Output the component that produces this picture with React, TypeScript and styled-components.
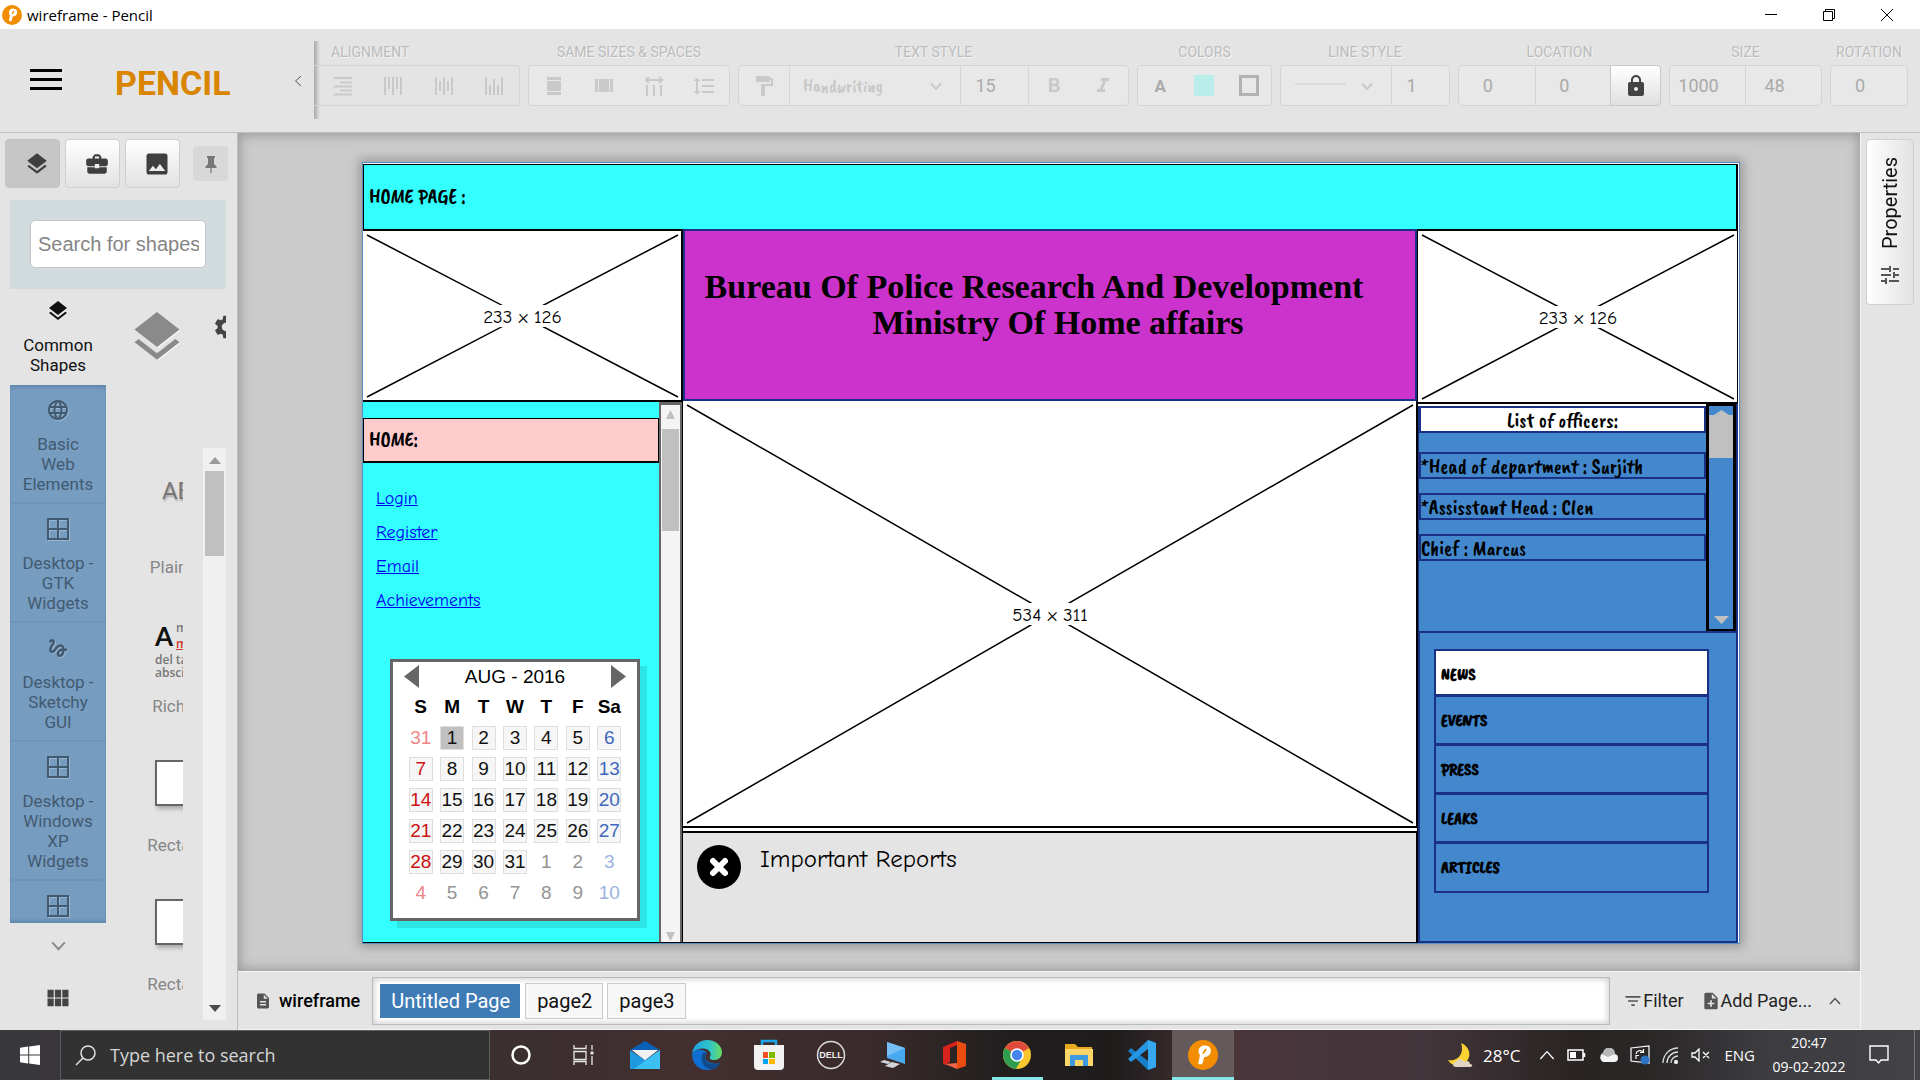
import React from "react";
import styled, { createGlobalStyle, css } from "styled-components";
import {
  MdLayers, MdBusinessCenter, MdImage, MdLanguage, MdGesture, MdSettings, MdViewModule,
  MdFormatPaint, MdLock, MdFilterList, MdNoteAdd, MdDescription, MdTune,
  MdFormatBold, MdFormatItalic, MdFormatLineSpacing,
} from "react-icons/md";

const ui = `Roboto, "Liberation Sans", sans-serif`;
const system = `"Segoe UI", "Open Sans", "Noto Sans", sans-serif`;
const comic = `"Comic Sans MS", "Comic Neue", "Noto Sans", sans-serif`;
const brush = `"Caveat Brush", "Roboto Condensed", "Liberation Sans Narrow", Roboto, sans-serif`;
const arial = `Arial, "Liberation Sans", sans-serif`;
const navy = "#1b3185";
const sky = "#4388cd";
const cyan = "#33ffff";

const Global = createGlobalStyle`
  * { box-sizing: border-box; }
  body { margin: 0; font-family: ${ui}; background: #e4e4e4; }
  button, input, select { font: inherit; color: inherit; margin: 0; padding: 0; border: 0; background: none; border-radius: 0; }
  svg { display: block; flex: none; }
`;

const Shell = styled.div`
  display: flex;
  flex-direction: column;
  height: 100vh;
  min-height: 720px;
  overflow: hidden;
`;

/* ---------- title bar ---------- */
const TitleBar = styled.header`
  display: flex;
  align-items: center;
  height: 29px;
  flex: none;
  padding: 0 4px 0 2px;
  background: #fff;
  font: 15px/20px ${system};
  color: #000;
`;
const WindowTitle = styled.span`
  flex: 1;
  padding-left: 5px;
`;
const WindowButton = styled.button`
  display: grid;
  place-items: center;
  width: 58px;
  height: 29px;
`;

const PencilLogo = ({ size }: { size: number }) => (
  <svg width={size} height={size} viewBox="0 0 20 20">
    <circle cx="10" cy="10" r="10" fill="#f28c00" />
    <path d="M7.5 15.5 8.6 10C7.7 9 7.3 8 7.6 6.800 8.200 4.800 10 4 12 4.300c2 .3 3 1.800 2.600 3.700-.4 1.900-2.200 3-4.200 2.700L9 15.600z" fill="#fff" stroke="#fff" strokeWidth="1.200" strokeLinejoin="round" />
    <path d="m10.300 8.600 1.500-2.200" stroke="#f28c00" strokeWidth="1.200" strokeLinecap="round" />
  </svg>
);

/* ---------- tool bar ---------- */
const ToolBar = styled.div`
  display: flex;
  height: 104px;
  flex: none;
  background: #e4e4e4;
  border-bottom: 1px solid #bebebe;
`;
const Brand = styled.div`
  display: flex;
  align-items: center;
  width: 314px;
  height: 104px;
  flex: none;
  padding: 0 10px 0 30px;
`;
const MenuButton = styled.button`
  display: flex;
  flex-direction: column;
  gap: 6px;
  width: 32px;
  margin-bottom: 4px;
`;
const MenuBar = styled.span`
  height: 3px;
  background: #000;
`;
const BrandName = styled.strong`
  flex: 1;
  padding: 3px 0 0 53px;
  font-size: 34px;
  line-height: 40px;
  font-weight: 700;
  color: #d98500;
`;
const PlainButton = styled.button<{ $tone?: string }>`
  display: grid;
  place-items: center;
  color: ${(p) => p.$tone ?? "#555"};
`;
const Tools = styled.div`
  display: flex;
  gap: 8px;
  flex: 1;
  height: 78px;
  margin-top: 12px;
  overflow: hidden;
  background: linear-gradient(90deg, #a8a8a8, #e4e4e4) left top / 6px 100% no-repeat;
`;
const GroupLabel = styled.span`
  padding-top: 1px;
  height: 24px;
  line-height: 20px;
  font-size: 14px;
  text-align: center;
  white-space: nowrap;
  color: #bcbcbc;
  text-shadow: 1px 1px 0 #f4f4f4;
`;
const GroupBox = styled.div`
  display: flex;
  height: 41px;
  border: 1px solid #d4d4d4;
  border-radius: 4px;
  background: #e8e8e8;
  color: #c9c9c9;
`;
const Group = styled.fieldset<{ $w: number; $clip?: boolean }>`
  display: flex;
  flex-direction: column;
  width: ${(p) => p.$w}px;
  flex: none;
  margin: 0;
  padding: 0;
  border: 0;
  ${(p) => p.$clip && css`
    ${GroupLabel} { text-align: left; padding-left: 17px; }
    ${GroupBox} { border-left: 0; border-radius: 0 4px 4px 0; padding-left: 4px; background: none; }
  `}
`;
const Cell = styled.div<{ $w?: number; $line?: boolean }>`
  display: grid;
  grid-template-columns: 1fr auto;
  align-items: center;
  ${(p) => (p.$w ? `width: ${p.$w}px;` : "flex: 1;")}
  ${(p) => p.$line && "border-right: 1px solid #d6d6d6;"}
`;
const ToolButton = styled.button`
  display: grid;
  place-items: center;
  flex: 1;
  height: 39px;
`;
const Value = styled.input<{ $line?: boolean }>`
  flex: 1;
  width: 100%;
  min-width: 0;
  padding-right: 18px;
  font-size: 18px;
  text-align: center;
  color: #aaa;
  ${(p) => p.$line && "border-right: 1px solid #d6d6d6;"}
`;
const Pick = styled.select`
  grid-area: 1 / 1 / 2 / 3;
  height: 39px;
  width: 100%;
  padding-left: 13px;
  appearance: none;
  font-family: ${brush};
  font-size: 18px;
  color: #c8c8c8;
`;
const PickMark = styled.span`
  grid-area: 1 / 2;
  padding-right: 18px;
  pointer-events: none;
`;
const PickLine = styled.span`
  grid-area: 1 / 1;
  width: 51px;
  height: 2px;
  margin: 0 0 4px 14px;
  background: #dcdcdc;
`;
const FontLetter = styled.span`
  font-size: 17px;
  font-weight: 700;
  color: #aaa;
`;
const Swatch = styled.span<{ $ring?: boolean }>`
  width: 20px;
  height: 21px;
  ${(p) => (p.$ring ? "border: 3px solid #b2b2b2;" : "background: #b9edea;")}
`;
const LockButton = styled.button`
  display: grid;
  place-items: center;
  width: 51px;
  border: 1px solid #c8c8c8;
  border-radius: 0 4px 4px 0;
  margin: -1px;
  background: linear-gradient(#fff, #e0e0e0);
  color: #444;
`;

const Chevron = ({ dir, size = 12, w = 2 }: { dir: "up" | "down" | "left"; size?: number; w?: number }) => {
  const d = { up: "M1 9 6 3.500 11 9", down: "M1 3.500 6 9 11 3.500", left: "M9 1 3.500 6 9 11" }[dir];
  return (
    <svg width={size} height={size} viewBox="0 0 12 12" fill="none" stroke="currentColor" strokeWidth={w}>
      <path d={d} />
    </svg>
  );
};
const Bars = ({ d, w = 2 }: { d: string; w?: number }) => (
  <svg width="20" height="20" viewBox="0 0 20 20" fill="none" stroke="currentColor" strokeWidth={w}>
    <path d={d} />
  </svg>
);

/* ---------- body ---------- */
const Body = styled.div`
  display: flex;
  flex: 1;
  min-height: 0;
`;
const SidePanel = styled.aside`
  display: flex;
  flex-direction: column;
  width: 238px;
  flex: none;
  padding: 6px 11px 0 10px;
  border-right: 1px solid #bdbdbd;
  background: #e4e4e4;
`;
const PanelTabs = styled.div`
  display: flex;
  align-items: center;
  gap: 5px;
  margin-left: -5px;
  margin-right: -2px;
`;
const PanelTab = styled.button<{ $on?: boolean }>`
  display: grid;
  place-items: center;
  width: 55px;
  height: 49px;
  padding-left: 8px;
  border: 1px solid ${(p) => (p.$on ? "#c2c2c2" : "#cfcfcf")};
  border-radius: 4px;
  background: ${(p) => (p.$on ? "#c6c6c6" : "linear-gradient(#fff, #e2e2e2)")};
  color: #3f3f3f;
`;
const PinButton = styled.button`
  display: grid;
  place-items: center;
  width: 35px;
  height: 35px;
  margin-left: auto;
  border-radius: 4px;
  background: #d8d8d8;
  color: #777;
`;
const SearchBand = styled.div`
  margin-top: 12px;
  padding: 20px 20px 21px;
  background: #d1dadd;
`;
const SearchInput = styled.input`
  display: block;
  width: 100%;
  height: 48px;
  padding: 0 6px 0 7px;
  border: 1px solid #c4c8ca;
  border-radius: 5px;
  background: #fff;
  font: 20px ${arial};
  &::placeholder { color: #858585; }
`;
const Library = styled.div`
  display: flex;
  flex: 1;
  min-height: 0;
`;
const Categories = styled.nav`
  display: flex;
  flex-direction: column;
  width: 96px;
  flex: none;
`;
const CategoryList = styled.div`
  flex: 1;
  min-height: 0;
  overflow: hidden;
  background: #769cc0;
  box-shadow: inset 0 4px 4px -2px #5d83a8, inset 0 -4px 4px -2px #5d83a8;
`;
const Category = styled.button<{ $on?: boolean }>`
  display: flex;
  flex-direction: column;
  align-items: center;
  gap: 12px;
  width: 96px;
  flex: none;
  padding: ${(p) => (p.$on ? 10 : 13)}px 10px 8px;
  border-bottom: 2px solid ${(p) => (p.$on ? "#e4e4e4" : "#6e94b9")};
  font-size: 17px;
  line-height: 20px;
  color: ${(p) => (p.$on ? "#111" : "#425a70")};
  svg { width: 24px; height: 24px; filter: drop-shadow(1px 1px 0 rgba(255, 255, 255, 0.25)); }
`;
const CategoryFoot = styled.div`
  display: flex;
  flex-direction: column;
  align-items: center;
  gap: 31px;
  height: 107px;
  padding-top: 15px;
`;
const Shapes = styled.section`
  display: flex;
  flex-direction: column;
  flex: 1;
  min-width: 0;
`;
const ShapesHead = styled.div`
  display: flex;
  align-items: flex-start;
  justify-content: space-between;
  height: 159px;
  flex: none;
  padding: 18px 0 0 21px;
  overflow: hidden;
`;
const HeadIcon = styled.span`
  color: #8a8a8a;
  filter: drop-shadow(1px 1px 0 #f6f6f6);
`;
const GearButton = styled.button`
  display: flex;
  justify-content: flex-start;
  width: 14px;
  padding-top: 6px;
  overflow: hidden;
  color: #444;
`;
const ShapesBody = styled.div`
  display: flex;
  justify-content: space-between;
  flex: 1;
  min-height: 0;
  padding-bottom: 10px;
`;
const ShapeList = styled.div`
  width: 77px;
  overflow: hidden;
`;
const Shape = styled.figure`
  display: flex;
  flex-direction: column;
  align-items: center;
  gap: 12px;
  width: 158px;
  height: 139px;
  margin: 0;
  padding-top: 17px;
`;
const ShapeThumb = styled.div`
  display: flex;
  align-items: center;
  justify-content: center;
  width: 60px;
  height: 80px;
`;
const ShapeName = styled.figcaption`
  font-size: 17px;
  line-height: 20px;
  white-space: nowrap;
  color: #868686;
`;
const PlainSample = styled.span`
  padding-bottom: 28px;
  font: 24px/28px ${ui};
  color: #777;
  text-shadow: 1px 2px 2px #aaa;
`;
const RichSample = styled.div`
  display: grid;
  grid-template: 16px 16px 13px 13px / 20px 1fr;
  column-gap: 1px;
  width: 60px;
  margin-top: 12px;
  font: 600 12px/14px "Open Sans", sans-serif;
  color: #777;
`;
const BigA = styled.span`
  grid-row: 1 / 3;
  font: 700 26px/30px Lato, sans-serif;
  color: #111;
`;
const Misspelt = styled.span`
  color: #c33;
  text-decoration: underline;
`;
const Wide = styled.span`
  grid-column: 1 / 3;
`;
const RectSample = styled.span`
  width: 60px;
  height: 46px;
  border: 2px solid #666;
  background: #fff;
  box-shadow: 2px 3px 4px #aaa;
`;
const ScrollTrack = styled.div`
  display: flex;
  flex-direction: column;
  align-items: center;
  width: 23px;
  height: 100%;
  padding: 9px 0 8px;
  background: #f0f0f0;
`;
const ScrollThumb = styled.div`
  width: 19px;
  height: 85px;
  margin: 7px 0 auto;
  background: #c0c0c0;
`;
const Triangle = ({ dir, color, w = 12, h = 7 }: { dir: "up" | "down" | "left" | "right"; color: string; w?: number; h?: number }) => (
  <svg width={w} height={h} viewBox="0 0 10 10" preserveAspectRatio="none" fill={color}>
    <path d={{ up: "M0 10 5 0l5 10z", down: "M0 0h10L5 10z", left: "M10 0v10L0 5z", right: "M0 0v10l10-5z" }[dir]} />
  </svg>
);
const Pane = () => (
  <svg viewBox="0 0 24 24" fill="none" stroke="currentColor" strokeWidth="2">
    <path d="M2 2h20v20H2zM12 2v20M2 12h20" />
  </svg>
);

/* ---------- workspace ---------- */
const Main = styled.main`
  display: flex;
  flex-direction: column;
  flex: 1;
  min-width: 0;
`;
const Workspace = styled.div`
  display: flex;
  flex: 1;
  min-height: 0;
  padding: 29px 120px 27px 124px;
  background: #cbcbcb;
  box-shadow: inset 0 0 12px 2px #999;
`;
const Sheet = styled.article`
  display: flex;
  flex-direction: column;
  flex: 1;
  min-width: 0;
  padding: 1px 1px 0 0;
  border: 1px solid #5a8fc2;
  background: #fff;
  box-shadow: 0 0 10px 3px #999;
  color: #000;
`;
const PageHead = styled.h1`
  display: flex;
  align-items: center;
  height: 67px;
  margin: 0;
  padding: 0 0 2px 5px;
  border: solid #000;
  border-width: 1px 2px 2px 1px;
  background: ${cyan};
  font: 400 21px/24px ${brush};
`;
const Columns = styled.div`
  display: flex;
  flex: 1;
  min-height: 0;
`;
const SideColumn = styled.section`
  display: flex;
  flex-direction: column;
  width: 319px;
  flex: none;
`;
const MidColumn = styled.section`
  display: flex;
  flex-direction: column;
  flex: 1;
  min-width: 0;
  margin-top: -2px;
  border-left: 1px solid #000;
`;
const PictureBox = styled.div<{ $h?: number }>`
  display: grid;
  place-items: center;
  ${(p) => (p.$h ? `height: ${p.$h}px; flex: none;` : "flex: 1; min-height: 0;")}
  border: solid #000;
  border-width: 0 1px 2px 0;
  background: #fff;
  padding: 4px 3px 3px 4px;
  > * { grid-area: 1 / 1; }
  > svg { width: 100%; height: 100%; min-height: 0; overflow: visible; }
`;
const PictureLabel = styled.span`
  padding: 2px 2px 0;
  background: #fff;
  font: 19px/20px ${comic};
`;
const Picture = ({ h, label }: { h?: number; label: string }) => (
  <PictureBox $h={h}>
    <svg viewBox="0 0 100 100" preserveAspectRatio="none" stroke="#000" strokeWidth="1.500">
      <path d="M0 0 100 100M100 0 0 100" vectorEffect="non-scaling-stroke" />
    </svg>
    <PictureLabel>{label}</PictureLabel>
  </PictureBox>
);

const LeftPanel = styled.div`
  display: flex;
  flex: 1;
  min-height: 0;
  border-bottom: 1px solid #000;
`;
const LeftBody = styled.div`
  flex: 1;
  padding-top: 16px;
  background: ${cyan};
`;
const HomeTitle = styled.h2`
  height: 45px;
  margin: 0;
  padding: 8px 5px;
  border: solid #000;
  border-width: 1px 1px 2px;
  background: #ffcccc;
  font: 400 21px/24px ${brush};
`;
const Links = styled.ul`
  display: flex;
  flex-direction: column;
  gap: 10px;
  margin: 24px 0 0 13px;
  padding: 0;
  list-style: none;
  font: 18px/24px ${comic};
`;
const PageLink = styled.a`
  color: #0000f5;
  text-decoration: underline;
`;
const SketchScroll = styled.div`
  display: flex;
  flex-direction: column;
  align-items: center;
  justify-content: space-between;
  width: 23px;
  padding: 5px 0 1px;
  border: solid #666;
  border-width: 3px 2px 0;
  background: #f4f4f4;
`;
const SketchThumb = styled.div`
  width: 17px;
  height: 102px;
  margin: 10px 0 auto;
  background: #c0c0c0;
`;
const CalendarBox = styled.div`
  width: 250px;
  height: 262px;
  margin: 46px 0 0 27px;
  border: 3px solid #666;
  background: #fff;
  box-shadow: 7px 7px 0 #2ee5e5;
  font: 19px/21px ${arial};
`;
const CalendarHead = styled.div`
  display: flex;
  align-items: center;
  justify-content: space-between;
  height: 28px;
  padding: 0 11px;
`;
const CalendarTable = styled.table`
  width: 220px;
  margin: 0 12px;
  border-collapse: collapse;
  table-layout: fixed;
  text-align: center;
  th { height: 32px; padding: 0; }
  td { height: 31px; padding: 0; }
`;
const Day = styled.span<{ $col: number; $out?: boolean; $on?: boolean }>`
  display: block;
  width: 24px;
  height: 24px;
  margin: 0 auto;
  border: 1px solid ${(p) => (p.$out ? "transparent" : "#dedede")};
  background: ${(p) => (p.$out ? "#fff" : p.$on ? "#c0c0c0" : "#f6f6f6")};
  color: ${(p) =>
    p.$col === 0 ? (p.$out ? "#ee8484" : "#cc1111") : p.$col === 6 ? (p.$out ? "#9db2e0" : "#4068bd") : p.$out ? "#949494" : "#111"};
`;

const Banner = styled.div`
  height: 172px;
  flex: none;
  padding: 38px 32px 0 0;
  border: 2px solid ${navy};
  background: #cc33cc;
  text-align: center;
  font: 700 34px/36px "Times New Roman", "Liberation Serif", serif;
`;
const BannerLine = styled.div<{ $shift?: boolean }>`
  padding-left: ${(p) => (p.$shift ? 48 : 0)}px;
  white-space: nowrap;
`;
const Reports = styled.div`
  display: flex;
  gap: 19px;
  height: 112px;
  flex: none;
  margin-top: 3px;
  padding: 12px 14px;
  border: solid #000;
  border-width: 2px 1px 1px 0;
  background: #e4e4e4;
  font: 25px/28px ${comic};
`;

const RightColumn = styled(SideColumn)`
  width: 321px;
  border-left: 1px solid #000;
`;
const Officers = styled.div`
  display: flex;
  height: 227px;
  flex: none;
  border-right: 2px solid ${navy};
`;
const OfficerList = styled.ul`
  flex: 1;
  margin: 2px 0 0;
  padding: 0;
  list-style: none;
  background: ${sky};
  border-left: 1px solid ${navy};
`;
const Officer = styled.li<{ $title?: boolean }>`
  height: 27px;
  margin-bottom: ${(p) => (p.$title ? 19 : 14)}px;
  border: 2px solid ${navy};
  ${(p) => p.$title && "background: #fff; text-align: center;"}
  font: 21px/24px ${brush};
  white-space: nowrap;
`;
const OfficerScroll = styled.div`
  display: flex;
  flex-direction: column;
  align-items: center;
  width: 30px;
  padding: 4px 0 5px;
  border: solid #000;
  border-width: 2px 3px;
  background: ${sky};
`;
const OfficerThumb = styled.div`
  width: 24px;
  height: 43px;
  margin-bottom: auto;
  background: #c0c0c0;
`;
const NewsPanel = styled.div`
  flex: 1;
  padding: 16px 27px 0 14px;
  border: 2px solid ${navy};
  background: ${sky};
`;
const NewsList = styled.ul`
  margin: 0;
  padding: 0;
  border: 2px solid ${navy};
  list-style: none;
`;
const NewsItem = styled.li<{ $on?: boolean }>`
  height: ${(p) => (p.$on ? 46 : 49)}px;
  padding-left: 5px;
  border-bottom: 3px solid ${navy};
  ${(p) => p.$on && "background: #fff;"}
  font: 700 17px/48px ${brush};
  &:last-child { border-bottom: 0; height: 47px; }
`;

/* ---------- page tabs ---------- */
const PageBar = styled.footer`
  display: flex;
  align-items: center;
  height: 59px;
  flex: none;
  padding: 0 19px 0 16px;
  border: 1px solid #f6f6f6;
  border-width: 1px 0;
  background: #e4e4e4;
  color: #555;
`;
const DocName = styled.strong`
  padding: 0 12px 0 7px;
  font-size: 18px;
  font-weight: 500;
  color: #000;
`;
const PageTabs = styled.div`
  display: flex;
  align-items: center;
  gap: 4px;
  flex: 1;
  height: 48px;
  margin-right: 13px;
  padding: 0 6px;
  border: 1px solid #bbb;
  background: #fff;
  box-shadow: inset 0 0 6px 1px #ccc;
`;
const PageTab = styled.button<{ $on?: boolean }>`
  height: 36px;
  padding: 0 10px 0 11px;
  font-size: 20px;
  border: 1px solid ${(p) => (p.$on ? "#fff" : "#cacaca")};
  background: ${(p) => (p.$on ? "#3f7cb6" : "#f7f7f7")};
  background-clip: padding-box;
  color: ${(p) => (p.$on ? "#fff" : "#111")};
`;
const BarButton = styled.button`
  display: flex;
  align-items: center;
  margin-right: 17px;
  font-size: 18px;
  white-space: nowrap;
  svg { color: #555; }
  span { color: #222; }
`;
const RightRail = styled.aside`
  width: 60px;
  flex: none;
  padding: 6px 5px;
  border-left: 1px solid #f6f6f6;
  background: #e4e4e4;
`;
const PropertiesButton = styled.button`
  display: flex;
  align-items: center;
  justify-content: center;
  gap: 14px;
  width: 48px;
  height: 166px;
  padding: 0 2px;
  writing-mode: vertical-rl;
  transform: rotate(180deg);
  border: 1px solid #cfcfcf;
  border-radius: 4px;
  background: linear-gradient(to left, #fff, #e2e2e2);
  font-size: 20px;
  color: #111;
  svg { color: #555; }
`;

/* ---------- task bar ---------- */
const TaskBar = styled.footer`
  display: flex;
  height: 50px;
  flex: none;
  background: linear-gradient(90deg, #39383d 0, #3c2f30 28%, #432f2f 36%, #382a2b 46%, #1f1d1d 53%, #1f1c1c 58%, #49353a 64%, #43363c 74%, #292423 82%, #2a2727 86%, #3d3c40 92%, #424247 100%);
  color: #fff;
  font-family: ${system};
`;
const StartButton = styled.button`
  display: grid;
  place-items: center;
  width: 60px;
`;
const TaskSearch = styled.label`
  display: flex;
  align-items: center;
  gap: 14px;
  width: 430px;
  padding-left: 14px;
  border: 1px solid #5c5c5c;
  background: #323232;
`;
const TaskInput = styled.input`
  flex: 1;
  min-width: 0;
  font-size: 18px;
  &::placeholder { color: #d6d6d6; opacity: 1; }
`;
const TaskButton = styled.button<{ $open?: boolean; $on?: boolean }>`
  display: grid;
  place-items: center;
  width: 62px;
  height: 50px;
  ${(p) => p.$on && "background: #645a5c; border-bottom: 3px solid #85e6ea; padding-top: 3px;"}
  ${(p) => p.$open && "background: linear-gradient(#85e6ea, #85e6ea) center bottom / 51px 3px no-repeat;"}
`;
const Tray = styled.div`
  display: flex;
  align-items: center;
  gap: 12px;
  margin-left: auto;
  padding-right: 5px;
  font-size: 15px;
  white-space: nowrap;
`;
const Weather = styled.span`
  display: flex;
  align-items: center;
  gap: 9px;
  padding-right: 7px;
  font-size: 17px;
`;
const Lang = styled.span`
  padding-left: 2px;
`;
const Clock = styled.time`
  display: flex;
  flex-direction: column;
  width: 84px;
  text-align: center;
  font-size: 14px;
  line-height: 24px;
`;
const TrayEnd = styled.span`
  display: flex;
  align-items: center;
  height: 50px;
  margin-left: 6px;
  padding-right: 25px;
  border-right: 1px solid #77777a;
`;

const weeks = [
  [31, 1, 2, 3, 4, 5, 6],
  [7, 8, 9, 10, 11, 12, 13],
  [14, 15, 16, 17, 18, 19, 20],
  [21, 22, 23, 24, 25, 26, 27],
  [28, 29, 30, 31, 1, 2, 3],
  [4, 5, 6, 7, 8, 9, 10],
];
const outside = (r: number, c: number) => (r === 0 && c === 0) || (r === 4 && c > 3) || r === 5;

const TitleRow = () => (
  <TitleBar>
    <PencilLogo size={20} />
    <WindowTitle>wireframe - Pencil</WindowTitle>
    <WindowButton aria-label="Minimize">
      <svg width="12" height="12" stroke="#000"><path d="M0 5.500h12" /></svg>
    </WindowButton>
    <WindowButton aria-label="Restore">
      <svg width="12" height="12" fill="none" stroke="#000"><path d="M.5 2.500h9v9h-9zM2.500 2.500v-2h9v9h-2" /></svg>
    </WindowButton>
    <WindowButton aria-label="Close">
      <svg width="12" height="12" stroke="#000"><path d="m0 0 12 12M12 0 0 12" /></svg>
    </WindowButton>
  </TitleBar>
);

const ToolRow = () => (
  <ToolBar>
    <Brand>
      <MenuButton aria-label="Menu"><MenuBar /><MenuBar /><MenuBar /></MenuButton>
      <BrandName>PENCIL</BrandName>
      <PlainButton aria-label="Collapse"><Chevron dir="left" w={1} /></PlainButton>
    </Brand>
    <Tools>
      <Group $w={206} $clip>
        <GroupLabel>ALIGNMENT</GroupLabel>
        <GroupBox>
          <ToolButton aria-label="Align right"><Bars d="M1 2h18M7 6.500h12M1 10.500h18M7 14.500h12M1 18.500h18" /></ToolButton>
          <ToolButton aria-label="Align top"><Bars d="M2 1v18M6 1v12M10 1v18M14 1v12M18 1v18" /></ToolButton>
          <ToolButton aria-label="Align middle"><Bars d="M2 1v18M6 5v10M10 1v18M14 5v10M18 1v18" /></ToolButton>
          <ToolButton aria-label="Align bottom"><Bars d="M2 1v18M6 9v10M10 3v16M14 9v10M18 1v18" /></ToolButton>
        </GroupBox>
      </Group>
      <Group $w={202}>
        <GroupLabel>SAME SIZES &amp; SPACES</GroupLabel>
        <GroupBox>
          <ToolButton aria-label="Same width">
            <svg width="16" height="20" fill="currentColor"><path d="M1 1h14v3H1zM1 5h14v10H1zM1 16h14v3H1z" /></svg>
          </ToolButton>
          <ToolButton aria-label="Same height">
            <svg width="18" height="20" fill="currentColor"><path d="M0 3h3v13H0zM4 3h10v13H4zM15 3h3v13h-3z" /></svg>
          </ToolButton>
          <ToolButton aria-label="Same horizontal space"><Bars d="M3 9v11M10 9v11M17 9v11M2 4h16M5 1 2 4l3 3M15 1l3 3-3 3" /></ToolButton>
          <ToolButton aria-label="Same vertical space"><MdFormatLineSpacing size={24} /></ToolButton>
        </GroupBox>
      </Group>
      <Group $w={391}>
        <GroupLabel>TEXT STYLE</GroupLabel>
        <GroupBox>
          <Cell $w={51} $line><ToolButton aria-label="Copy format"><MdFormatPaint size={24} /></ToolButton></Cell>
          <Cell $w={171} $line>
            <Pick aria-label="Font"><option>Handwriting</option></Pick>
            <PickMark><Chevron dir="down" /></PickMark>
          </Cell>
          <Cell $w={68} $line><Value aria-label="Font size" defaultValue="15" /></Cell>
          <ToolButton aria-label="Bold"><MdFormatBold size={24} /></ToolButton>
          <ToolButton aria-label="Italic"><MdFormatItalic size={24} /></ToolButton>
        </GroupBox>
      </Group>
      <Group $w={135}>
        <GroupLabel>COLORS</GroupLabel>
        <GroupBox>
          <ToolButton aria-label="Text color"><FontLetter>A</FontLetter></ToolButton>
          <ToolButton aria-label="Fill color"><Swatch /></ToolButton>
          <ToolButton aria-label="Line color"><Swatch $ring /></ToolButton>
        </GroupBox>
      </Group>
      <Group $w={170}>
        <GroupLabel>LINE STYLE</GroupLabel>
        <GroupBox>
          <Cell $w={111} $line>
            <PickLine />
            <Pick aria-label="Line style" />
            <PickMark><Chevron dir="down" /></PickMark>
          </Cell>
          <Value aria-label="Line width" defaultValue="1" />
        </GroupBox>
      </Group>
      <Group $w={203}>
        <GroupLabel>LOCATION</GroupLabel>
        <GroupBox>
          <Value aria-label="X" defaultValue="0" $line />
          <Value aria-label="Y" defaultValue="0" />
          <LockButton aria-label="Lock"><MdLock size={24} /></LockButton>
        </GroupBox>
      </Group>
      <Group $w={153}>
        <GroupLabel>SIZE</GroupLabel>
        <GroupBox>
          <Value aria-label="Width" defaultValue="1000" $line />
          <Value aria-label="Height" defaultValue="48" />
        </GroupBox>
      </Group>
      <Group $w={78}>
        <GroupLabel>ROTATION</GroupLabel>
        <GroupBox><Value aria-label="Angle" defaultValue="0" /></GroupBox>
      </Group>
    </Tools>
  </ToolBar>
);

const Side = () => (
  <SidePanel>
    <PanelTabs>
      <PanelTab $on aria-label="Shapes"><MdLayers size={26} /></PanelTab>
      <PanelTab aria-label="Private"><MdBusinessCenter size={26} /></PanelTab>
      <PanelTab aria-label="Clipart"><MdImage size={28} /></PanelTab>
      <PinButton aria-label="Pin">
        <svg width="14" height="20" viewBox="0 0 14 20" fill="currentColor"><path d="M3 2h8v2h-1v6l2.500 2.500V14H7.600v5H6.400v-5H1.500v-1.500L4 10V4H3z" /></svg>
      </PinButton>
    </PanelTabs>
    <SearchBand><SearchInput aria-label="Search for shapes" placeholder="Search for shapes" /></SearchBand>
    <Library>
      <Categories>
        <Category $on><MdLayers />Common Shapes</Category>
        <CategoryList>
          <Category><MdLanguage />Basic Web Elements</Category>
          <Category><Pane />Desktop - GTK Widgets</Category>
          <Category><MdGesture />Desktop - Sketchy GUI</Category>
          <Category><Pane />Desktop - Windows XP Widgets</Category>
          <Category aria-label="More desktop widgets"><Pane /></Category>
        </CategoryList>
        <CategoryFoot>
          <PlainButton aria-label="Next" $tone="#888"><Chevron dir="down" size={15} w={1.5} /></PlainButton>
          <PlainButton aria-label="All collections" $tone="#444"><MdViewModule size={28} /></PlainButton>
        </CategoryFoot>
      </Categories>
      <Shapes>
        <ShapesHead>
          <HeadIcon><MdLayers size={60} /></HeadIcon>
          <GearButton aria-label="Settings"><MdSettings size={28} /></GearButton>
        </ShapesHead>
        <ShapesBody>
          <ShapeList>
            <Shape>
              <ShapeThumb><PlainSample>ABC</PlainSample></ShapeThumb>
              <ShapeName>Plain text</ShapeName>
            </Shape>
            <Shape>
              <ShapeThumb>
                <RichSample><BigA>A</BigA><span>mi</span><Misspelt>mi</Misspelt><Wide>del ta</Wide><Wide>abscis</Wide></RichSample>
              </ShapeThumb>
              <ShapeName>Rich text</ShapeName>
            </Shape>
            <Shape><ShapeThumb><RectSample /></ShapeThumb><ShapeName>Rectangle</ShapeName></Shape>
            <Shape><ShapeThumb><RectSample /></ShapeThumb><ShapeName>Rectangle</ShapeName></Shape>
          </ShapeList>
          <ScrollTrack>
            <Triangle dir="up" color="#9a9a9a" />
            <ScrollThumb />
            <Triangle dir="down" color="#4a4a4a" />
          </ScrollTrack>
        </ShapesBody>
      </Shapes>
    </Library>
  </SidePanel>
);

const Calendar = () => (
  <CalendarBox>
    <CalendarHead>
      <PlainButton aria-label="Previous month"><Triangle dir="left" color="#666" w={15} h={23} /></PlainButton>
      AUG - 2016
      <PlainButton aria-label="Next month"><Triangle dir="right" color="#666" w={15} h={23} /></PlainButton>
    </CalendarHead>
    <CalendarTable>
      <thead><tr>{["S", "M", "T", "W", "T", "F", "Sa"].map((d, i) => <th key={i}>{d}</th>)}</tr></thead>
      <tbody>
        {weeks.map((w, r) => (
          <tr key={r}>
            {w.map((d, c) => <td key={c}><Day $col={c} $out={outside(r, c)} $on={r === 0 && c === 1}>{d}</Day></td>)}
          </tr>
        ))}
      </tbody>
    </CalendarTable>
  </CalendarBox>
);

const Canvas = () => (
  <Workspace>
    <Sheet>
      <PageHead>HOME PAGE :</PageHead>
      <Columns>
        <SideColumn>
          <Picture h={171} label="233 x 126" />
          <LeftPanel>
            <LeftBody>
              <HomeTitle>HOME:</HomeTitle>
              <Links>
                {["Login", "Register", "Email", "Achievements"].map((t) => <li key={t}><PageLink href="#">{t}</PageLink></li>)}
              </Links>
              <Calendar />
            </LeftBody>
            <SketchScroll>
              <Triangle dir="up" color="#c0c0c0" w={9} h={9} />
              <SketchThumb />
              <Triangle dir="down" color="#c0c0c0" w={9} h={9} />
            </SketchScroll>
          </LeftPanel>
        </SideColumn>
        <MidColumn>
          <Banner>
            <BannerLine>Bureau Of Police Research And Development</BannerLine>
            <BannerLine $shift>Ministry Of Home affairs</BannerLine>
          </Banner>
          <Picture label="534 x 311" />
          <Reports>
            <svg width="44" height="44" viewBox="0 0 44 44">
              <circle cx="22" cy="22" r="22" />
              <path d="m16 16 12 12M28 16 16 28" stroke="#fff" strokeWidth="6" strokeLinecap="round" />
            </svg>
            Important Reports
          </Reports>
        </MidColumn>
        <RightColumn>
          <Picture h={173} label="233 x 126" />
          <Officers>
            <OfficerList>
              <Officer $title>List of officers:</Officer>
              <Officer>*Head of department : Surjith</Officer>
              <Officer>*Assisstant Head : Clen</Officer>
              <Officer>Chief : Marcus</Officer>
            </OfficerList>
            <OfficerScroll>
              <Triangle dir="up" color="#c0c0c0" w={15} h={5} />
              <OfficerThumb />
              <Triangle dir="down" color="#c0c0c0" w={15} h={8} />
            </OfficerScroll>
          </Officers>
          <NewsPanel>
            <NewsList>
              {["NEWS", "EVENTS", "PRESS", "LEAKS", "ARTICLES"].map((t, i) => <NewsItem key={t} $on={i === 0}>{t}</NewsItem>)}
            </NewsList>
          </NewsPanel>
        </RightColumn>
      </Columns>
    </Sheet>
  </Workspace>
);

const Task = () => (
  <TaskBar>
    <StartButton aria-label="Start">
      <svg width="20" height="20" viewBox="0 0 20 20" fill="#fff"><path d="M0 2.800 8.200 1.600v7.900H0zM9.200 1.500 20 0v9.500H9.200zM0 10.500h8.200v7.900L0 17.200zM9.200 10.500H20V20L9.200 18.500z" /></svg>
    </StartButton>
    <TaskSearch>
      <svg width="21" height="21" fill="none" stroke="#e4e4e4" strokeWidth="1.500"><circle cx="13" cy="8" r="7" /><path d="m8 13-7 7" /></svg>
      <TaskInput aria-label="Type here to search" placeholder="Type here to search" />
    </TaskSearch>
    <TaskButton aria-label="Cortana">
      <svg width="20" height="20"><circle cx="10" cy="10" r="8.500" fill="none" stroke="#fff" strokeWidth="2.500" /></svg>
    </TaskButton>
    <TaskButton aria-label="Task view">
      <svg width="21" height="20" fill="none" stroke="#e8e8e8" strokeWidth="1.300"><path d="M1 0v3.500h12V0M1 6.500h12v8H1zM1 20v-3.500h12V20M19 0v5M19 11v9" /><path d="M19 6.500v3" strokeWidth="3" /></svg>
    </TaskButton>
    <TaskButton aria-label="Mail">
      <svg width="30" height="28"><path d="M0 9 15 0l15 9z" fill="#0a62b8" /><path d="M2 9h26L15 19z" fill="#f2f2f2" /><path d="M0 9v19h30V9L15 19z" fill="#1f9ae0" /><path d="M30 9v19H4z" fill="#3cc0f4" /><path d="M2 9h26L15 19z" fill="#f2f2f2" /></svg>
    </TaskButton>
    <TaskButton aria-label="Edge">
      <svg width="30" height="30" viewBox="0 0 30 30">
        <defs><linearGradient id="edge"><stop offset="0" stopColor="#1f9fe0" /><stop offset=".6" stopColor="#2fc6c8" /><stop offset="1" stopColor="#6bdc5c" /></linearGradient></defs>
        <path d="M0 14c0 9 6 16 15 16 5 0 10-2 13-7-3 1-8 1-11-1-4-2-5-6-2-9-3-5-13-4-15 1z" fill="#0f6fd0" />
        <path d="M0 14C1 5 8 0 15 0c9 0 15 6 15 12.500 0 5-4 7.500-8 7.500-3.500 0-5-1.500-4-3 2-4-1-8.500-7-8.500C6 8.500 1 11 0 14z" fill="url(#edge)" />
        <path d="M10 15c-2 7 3 14 9 14 4 0 7-2 9-6-7 3-15 0-15-6 0-2 1-3 2-4-2-1-4-1-5 2z" fill="#114a8b" />
      </svg>
    </TaskButton>
    <TaskButton aria-label="Store">
      <svg width="30" height="34"><path d="M8 7V3h14v4" fill="none" stroke="#1ea4ec" strokeWidth="2.500" /><path d="M0 7h30v21a4 4 0 0 1-4 4H4a4 4 0 0 1-4-4z" fill="#f2f2f2" /><path d="M9 14h5v6H9z" fill="#f05022" /><path d="M15 14h6v6h-6z" fill="#7fba00" /><path d="M9 21h5v5H9z" fill="#00a4ef" /><path d="M15 21h6v5h-6z" fill="#ffb900" /></svg>
    </TaskButton>
    <TaskButton aria-label="Dell">
      <svg width="30" height="30"><circle cx="15" cy="15" r="13.500" fill="none" stroke="#ddd" strokeWidth="1.500" /><text x="15" y="18" textAnchor="middle" fontSize="9" fontWeight="700" fill="#eee" fontFamily="Liberation Sans, sans-serif">DELL</text></svg>
    </TaskButton>
    <TaskButton aria-label="Remote desktop">
      <svg width="28" height="28"><path d="m8 1 18 6v16L8 17z" fill="#4aa8ef" /><path d="m8 1 18 6L8 15z" fill="#74c0f6" /><path d="m5 19 7 2-3 2-8-2zM13 21l8 2-7 4-8-2z" fill="#d2d6da" /></svg>
    </TaskButton>
    <TaskButton aria-label="Office">
      <svg width="24" height="28"><path d="M0 6 14 0v4L7 7v14l-5 3-2-2z" fill="#d8231c" /><path d="m14 0 9 3v22l-9 3z" fill="#ea4b10" /><path d="m2 23 12-1v6z" fill="#f0644a" /></svg>
    </TaskButton>
    <TaskButton $open aria-label="Chrome">
      <svg width="28" height="28" viewBox="0 0 28 28"><circle cx="14" cy="14" r="14" fill="#f7c52c" /><path d="M14 14 1.900 7A14 14 0 0 1 26.100 7z" fill="#e04a3a" /><path d="M14 14 1.900 7A14 14 0 0 0 13 28l6-11z" fill="#2f9e50" /><circle cx="14" cy="14" r="6.800" fill="#fff" /><circle cx="14" cy="14" r="5.200" fill="#4486ee" /></svg>
    </TaskButton>
    <TaskButton aria-label="File Explorer">
      <svg width="28" height="24"><path d="M0 1h10l3 3h14v19H0z" fill="#e8a91c" /><path d="M0 6h28v17H0z" fill="#fcd668" /><path d="M5 12h18v11h-5v-6h-8v6H5z" fill="#3f9be0" /></svg>
    </TaskButton>
    <TaskButton aria-label="Visual Studio Code">
      <svg width="30" height="30"><path d="m22 0 8 3v24l-8 3L2 11l3-3 17 13z" fill="#1580c8" /><path d="M22 9 5 22l-3-3L22 0z" fill="#2496e4" /><path d="m22 0 8 3v24l-8 3z" fill="#35a8f0" /></svg>
    </TaskButton>
    <TaskButton $on aria-label="Pencil"><PencilLogo size={30} /></TaskButton>
    <Tray>
      <Weather>
        <svg width="28" height="26"><path d="M15 1c12 5 11 20-2 22-5 1-9-1-11-5 9 2 17-6 13-17z" fill="#fbd330" /><path d="M10 25c-4 0-4-5 0-5 1-4 7-4 8 0 2-2 6-1 6 2 3 0 3 3 0 3z" fill="#e0d3c4" /></svg>
        28°C
      </Weather>
      <Chevron dir="up" size={16} w={1} />
      <svg width="19" height="12" fill="none" stroke="#fff" strokeWidth="1.500"><path d="M1 1h15v10H1zM17.500 4v4" /><path d="M3 3h6v6H3z" fill="#fff" stroke="none" /></svg>
      <svg width="20" height="14" fill="#f4f4f4"><path d="M5 14a5 5 0 0 1 0-9 6 6 0 0 1 11 1 4 4 0 0 1 0 8z" /><path d="m3 6 7 3 7-3a6 6 0 0 0-12-1z" fill="#b8b8b8" /></svg>
      <svg width="20" height="20" fill="none" stroke="#fff" strokeWidth="1.200"><path d="M1 3 19 1v17L1 16z" /><path d="M6 9a4 4 0 0 1 7-2M13.500 4v3.500H10M6 14v-3.500h3" /><circle cx="15" cy="15" r="4.500" fill="#2d74c4" stroke="none" /></svg>
      <svg width="17" height="17" fill="none" stroke="#ddd" strokeWidth="1.300"><path d="M1 16A15 15 0 0 1 16 1M5 16A11 11 0 0 1 16 5M9 16a7 7 0 0 1 7-7" /><circle cx="14" cy="15" r="1.500" fill="#fff" /></svg>
      <svg width="19" height="14" fill="none" stroke="#fff" strokeWidth="1.300"><path d="M1 5h3l4-4v12L4 9H1zM12 4l6 6M18 4l-6 6" /></svg>
      <Lang>ENG</Lang>
      <Clock><span>20:47</span><span>09-02-2022</span></Clock>
      <TrayEnd>
        <svg width="20" height="20" fill="none" stroke="#fff" strokeWidth="1.400"><path d="M1 1h18v14h-7l-2.500 3L7 15H1z" /></svg>
      </TrayEnd>
    </Tray>
  </TaskBar>
);

export default function App() {
  return (
    <Shell>
      <Global />
      <TitleRow />
      <ToolRow />
      <Body>
        <Side />
        <Main>
          <Canvas />
          <PageBar>
            <MdDescription size={18} />
            <DocName>wireframe</DocName>
            <PageTabs>
              <PageTab $on>Untitled Page</PageTab>
              <PageTab>page2</PageTab>
              <PageTab>page3</PageTab>
            </PageTabs>
            <BarButton><MdFilterList size={20} /><span>Filter</span></BarButton>
            <BarButton><MdNoteAdd size={20} /><span>Add Page...</span></BarButton>
            <PlainButton aria-label="Expand"><Chevron dir="up" size={12} w={1.5} /></PlainButton>
          </PageBar>
        </Main>
        <RightRail>
          <PropertiesButton><MdTune size={24} />Properties</PropertiesButton>
        </RightRail>
      </Body>
      <Task />
    </Shell>
  );
}
